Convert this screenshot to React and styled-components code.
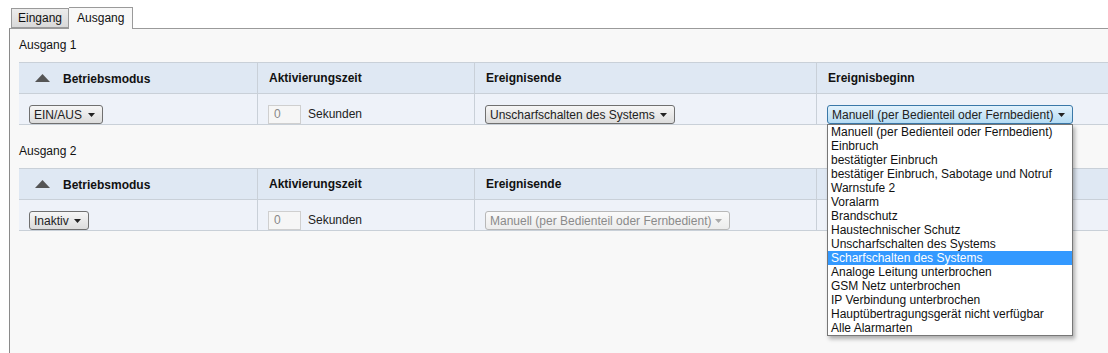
import React from 'react';
import styled, { createGlobalStyle } from 'styled-components';

const GlobalStyle = createGlobalStyle`
    html, body {
        margin: 0;
        padding: 0;
        background: #ffffff;
        overflow: hidden;
    }
    body {
        font-family: "Liberation Sans", Arial, sans-serif;
        font-size: 12px;
        color: #222;
    }
`;

const beginOptions = [
    'Manuell (per Bedienteil oder Fernbedient)',
    'Einbruch',
    'bestätigter Einbruch',
    'bestätiger Einbruch, Sabotage und Notruf',
    'Warnstufe 2',
    'Voralarm',
    'Brandschutz',
    'Haustechnischer Schutz',
    'Unscharfschalten des Systems',
    'Scharfschalten des Systems',
    'Analoge Leitung unterbrochen',
    'GSM Netz unterbrochen',
    'IP Verbindung unterbrochen',
    'Hauptübertragungsgerät nicht verfügbar',
    'Alle Alarmarten',
];

function Arrow({ disabled }) {
    return (
        <svg width="7" height="4" viewBox="0 0 7 4">
            <path d="M0 0 L7 0 L3.5 4 Z" fill={disabled ? '#aaa' : '#222'} />
        </svg>
    );
}

function Select({ value, width, focused, disabled }) {
    return (
        <SelectBox $width={width} $focused={focused} $disabled={disabled}>
            <span>{value}</span>
            <Arrow disabled={disabled} />
        </SelectBox>
    );
}

function OutputTable({ mode, modeWidth, end, endWidth, endDisabled, begin }) {
    return (
        <Grid>
            <HeadCell $first>
                <svg width="15" height="8" viewBox="0 0 15 8">
                    <path d="M7.5 0 L15 8 L0 8 Z" fill="#555" />
                </svg>
                <SortLabel>Betriebsmodus</SortLabel>
            </HeadCell>
            <HeadCell>Aktivierungszeit</HeadCell>
            <HeadCell>Ereignisende</HeadCell>
            <HeadCell>{begin ? 'Ereignisbeginn' : ''}</HeadCell>

            <Cell $first>
                <Select value={mode} width={modeWidth} />
            </Cell>
            <Cell>
                <NumberInput>0</NumberInput>
                <Unit>Sekunden</Unit>
            </Cell>
            <Cell>
                <Select value={end} width={endWidth} disabled={endDisabled} />
            </Cell>
            <Cell>
                {begin && (
                    <DropWrap>
                        <Select value={begin} width={246} focused />
                        <OptionList>
                            {beginOptions.map((o) => (
                                <Option key={o} $active={o === 'Scharfschalten des Systems'}>
                                    {o}
                                </Option>
                            ))}
                        </OptionList>
                    </DropWrap>
                )}
            </Cell>
        </Grid>
    );
}

export default function App() {
    return (
        <Page>
            <GlobalStyle />
            <TabBar>
                <Tab>Eingang</Tab>
                <Tab $active>Ausgang</Tab>
            </TabBar>
            <Panel>
                <SectionLabel $first>Ausgang 1</SectionLabel>
                <OutputTable
                    mode="EIN/AUS"
                    modeWidth={74}
                    end="Unscharfschalten des Systems"
                    endWidth={190}
                    begin="Manuell (per Bedienteil oder Fernbedient)"
                />
                <SectionLabel>Ausgang 2</SectionLabel>
                <OutputTable
                    mode="Inaktiv"
                    modeWidth={60}
                    end="Manuell (per Bedienteil oder Fernbedient)"
                    endWidth={245}
                    endDisabled
                />
            </Panel>
        </Page>
    );
}

const Page = styled.div`
    width: 1108px;
    height: 353px;
    display: flex;
    flex-direction: column;
    overflow: hidden;
`;

const TabBar = styled.div`
    display: flex;
    align-items: flex-end;
    padding: 7px 0 0 11px;
    height: 21px;
    position: relative;
    z-index: 1;
`;

const Tab = styled.div`
    box-sizing: border-box;
    height: ${(p) => (p.$active ? '22px' : '20px')};
    margin-bottom: ${(p) => (p.$active ? '-1px' : '0')};
    padding: 0 ${(p) => (p.$active ? '8px' : '6px')};
    border: 1px solid #9a9a9a;
    border-bottom: ${(p) => (p.$active ? 'none' : '1px solid #9a9a9a')};
    border-left: ${(p) => (p.$active ? 'none' : '1px solid #9a9a9a')};
    background: ${(p) => (p.$active ? '#f8f8f8' : 'linear-gradient(#ececec, #d9d9d9)')};
    line-height: ${(p) => (p.$active ? '20px' : '18px')};
    font-size: 12px;
    color: #111;
`;

const Panel = styled.div`
    flex: 1;
    display: flex;
    flex-direction: column;
    margin-left: 9px;
    border-top: 1px solid #9a9a9a;
    border-left: 1px solid #8a8a8a;
    background: #f8f8f8;
    padding-left: 9px;
`;

const SectionLabel = styled.div`
    line-height: 14px;
    margin: ${(p) => (p.$first ? '9px' : '19px')} 0 10px;
    color: #111;
`;

const Grid = styled.div`
    display: grid;
    grid-template-columns: 238px 217px 342px 320px;
    grid-template-rows: 31px 32px;
    width: 1117px;
`;

const HeadCell = styled.div`
    display: flex;
    align-items: center;
    gap: 13px;
    padding: 0 ${(p) => (p.$first ? '11px 0 16px' : '11px')};
    font-weight: bold;
    background: #dfe8f3;
    border-top: 1px solid #c9d0d8;
    border-left: ${(p) => (p.$first ? 'none' : '1px solid #c9d0d8')};
    color: #111;
`;

const SortLabel = styled.span`
    padding-top: 1px;
`;

const Cell = styled.div`
    display: flex;
    align-items: flex-start;
    gap: 7px;
    padding: 11px 10px 0;
    background: #eef2f9;
    border-top: 1px solid #c9d0d8;
    border-bottom: 1px solid #c9d0d8;
    border-left: ${(p) => (p.$first ? 'none' : '1px solid #c9d0d8')};
`;

const SelectBox = styled.div`
    box-sizing: border-box;
    width: ${(p) => p.$width}px;
    height: 19px;
    display: flex;
    align-items: center;
    justify-content: space-between;
    padding: 0 7px 0 4px;
    border: 1px solid ${(p) => (p.$focused ? '#3a78a8' : p.$disabled ? '#b8b8b8' : '#707070')};
    border-radius: 3px;
    background: ${(p) =>
        p.$focused
            ? 'linear-gradient(#e3f2fc, #b5dcf4)'
            : p.$disabled
            ? 'linear-gradient(#fafafa, #ececec)'
            : 'linear-gradient(#f6f6f6, #dcdcdc)'};
    color: ${(p) => (p.$disabled ? '#8a8a8a' : '#222')};
    white-space: nowrap;
    font-size: 12px;
`;

const Unit = styled.span`
    color: #222;
    line-height: 19px;
`;

const NumberInput = styled.div`
    box-sizing: border-box;
    width: 33px;
    height: 19px;
    line-height: 17px;
    padding-left: 5px;
    border: 1px solid #cfcfcf;
    background: #f6f6f6;
    color: #888;
`;

const DropWrap = styled.div`
    position: relative;
    width: 246px;
`;

const OptionList = styled.div`
    position: absolute;
    top: 19px;
    left: 0;
    box-sizing: border-box;
    width: 246px;
    border: 1px solid #777;
    background: #fff;
    box-shadow: 2px 3px 4px rgba(0, 0, 0, 0.3);
    z-index: 5;
`;

const Option = styled.div`
    height: 14px;
    line-height: 14px;
    padding-left: 3px;
    white-space: nowrap;
    background: ${(p) => (p.$active ? '#3399ff' : 'transparent')};
    color: ${(p) => (p.$active ? '#fff' : '#111')};
`;
